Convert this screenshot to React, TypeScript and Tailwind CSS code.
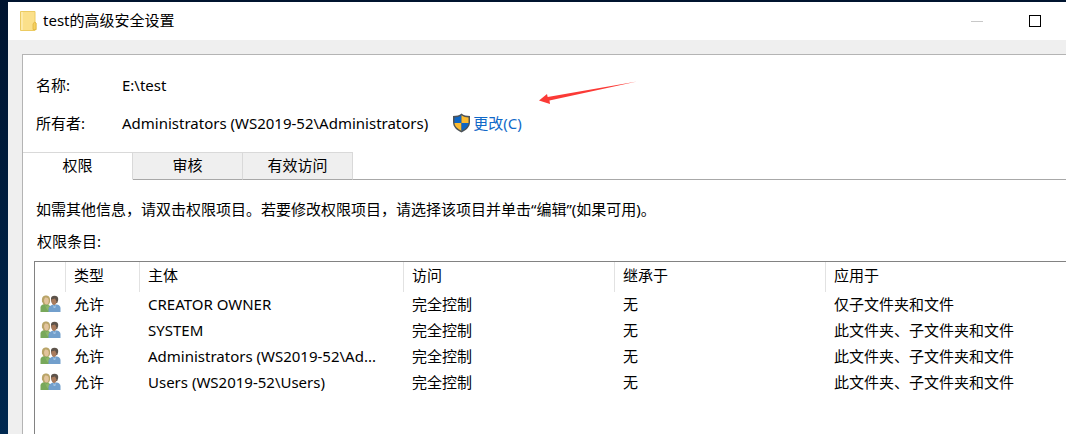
import React from "react";

type Entry = {
  type: string;
  principal: string;
  access: string;
  inherited: string;
  scope: string;
};

const entries: Entry[] = [
  { type: "允许", principal: "CREATOR OWNER", access: "完全控制", inherited: "无", scope: "仅子文件夹和文件" },
  { type: "允许", principal: "SYSTEM", access: "完全控制", inherited: "无", scope: "此文件夹、子文件夹和文件" },
  { type: "允许", principal: "Administrators (WS2019-52\\Ad...", access: "完全控制", inherited: "无", scope: "此文件夹、子文件夹和文件" },
  { type: "允许", principal: "Users (WS2019-52\\Users)", access: "完全控制", inherited: "无", scope: "此文件夹、子文件夹和文件" },
];

function FolderIcon() {
  return (
    <svg width="17" height="20" viewBox="0 0 17 20" aria-hidden="true">
      <path d="M0.5 0.5h14.5v10.5l1 1v6.500l-1 1H0.500z" fill="#fbe08a" stroke="#eccb62" />
      <path d="M1 1h2v18H1z" fill="#fdeaa9" />
      <path d="M13 18.500v-5.500l1.500-2 1.500 1v6.500z" fill="#f5d060" stroke="#e0b53f" strokeWidth="0.800" />
    </svg>
  );
}

function ShieldIcon() {
  return (
    <svg width="19" height="20" viewBox="0 0 19 20" aria-hidden="true">
      <path d="M9.500 0.500C7.500 2.300 4.500 3 1 3v6c0 5 3.500 8 8.500 10.500C14.500 17 18 14 18 9V3C14.500 3 11.500 2.300 9.500 0.500z" fill="#4e5357" />
      <path d="M9 2.500C7.300 3.800 5 4.400 2.500 4.500V10H9.500V2.200z" fill="#0f66c4" />
      <path d="M9.500 2.200C11.500 3.800 14 4.400 16.500 4.500V10h-7z" fill="#fdbb2f" />
      <path d="M2.500 10H9.500v7.700C5.500 15.700 2.800 13.500 2.500 10z" fill="#fdbb2f" />
      <path d="M9.500 10h7c-0.300 3.500-3 5.700-7 7.700z" fill="#0f66c4" />
    </svg>
  );
}

function GroupIcon() {
  return (
    <svg width="21" height="18" viewBox="0 0 21 18" aria-hidden="true">
      <path d="M0.500 17v-4.500c0-2 1.500-3 4-3.500h3l2.500 2v6z" fill="#78a85a" />
      <path d="M2 6.500C1.500 2.500 3 0.500 6 0.500s4.500 2 4 6.500l-1 2.500H3.500z" fill="#b9a468" />
      <path d="M5 2.500c2-0.500 3.800 0.500 3.800 3S8 9.500 6.500 9.500 4 7.500 4 5z" fill="#e2c49c" />
      <path d="M4.500 9l2 2.500 2-2 1 3-2 3z" fill="#8db668" />
      <path d="M8.500 17v-3c0-2 2-4 4.500-4.500h4c2.500 0.500 3.500 2 3.500 4V17z" fill="#729fcc" />
      <path d="M11 5c-0.500-3 1-4.200 3.500-4.200S18.500 2 18.200 5l-1 3-5.200 0.500z" fill="#5d534a" />
      <path d="M11.300 4.500 15 3.500l1.500 3c0 2-1 3.500-2.500 3.500s-2.700-2-2.700-5.500z" fill="#a97b5c" />
      <path d="M13 10l1.500 1.500L16 10l-0.700 3h-1.600z" fill="#a3c4e4" />
    </svg>
  );
}

function Arrow() {
  return (
    <svg className="absolute left-[516px] top-[25px]" width="100" height="26" viewBox="0 0 100 26" aria-hidden="true">
      <path d="M0 20.500 8 14l0.700 3L98 1.500 10.500 20.500l0.500 3.500z" fill="#fb3a36" />
    </svg>
  );
}

const tabs = ["权限", "审核", "有效访问"];

export default function App() {
  const [active, setActive] = React.useState(0);
  const th = "border-r border-[#e2e2e2] p-0 pb-1 pl-2 text-left font-normal";
  const td = "whitespace-nowrap p-0 pb-0.5 pl-2";

  return (
    <div className="min-h-screen overflow-hidden bg-linear-to-b from-[#00142f] to-[#002850] pl-2 pt-0.5 font-['Noto_Sans','Noto_Sans_CJK_SC',sans-serif] text-[15px] leading-6 text-black">
      <div className="flex min-h-[432px] flex-col bg-[#efefef]">
        <header className="flex h-[38px] items-center bg-white pl-3 pr-6">
          <FolderIcon />
          <h1 className="ml-1.5 flex-1 pb-0.5 text-[15px]">test的高级安全设置</h1>
          <button type="button" aria-label="最小化" className="mr-11 flex h-6 w-3.5 items-center justify-center">
            <span className="h-px w-3 bg-[#c8c8c8]" />
          </button>
          <button type="button" aria-label="最大化" className="flex h-6 w-3.5 items-center justify-center">
            <span className="size-3 border border-black" />
          </button>
        </header>

        <main className="flex flex-1 flex-col pl-3.5 pt-3.5">
          <div className="relative flex flex-1 flex-col border-l border-t border-[#b4b4b4] bg-white pt-[18px]">
            <dl className="grid grid-cols-[86px_1fr] gap-y-3.5 pl-[13px]">
              <dt>名称:</dt>
              <dd>E:\test</dd>
              <dt>所有者:</dt>
              <dd className="flex items-center">
                Administrators (WS2019-52\Administrators)
                <a href="#change" className="ml-6 flex items-center gap-0.5 text-[#0f68c8]">
                  <ShieldIcon />
                  更改(C)
                </a>
              </dd>
            </dl>
            <Arrow />

            <div role="tablist" className="mt-[17px] flex h-7">
              {tabs.map((tab, i) => (
                <button
                  key={tab}
                  type="button"
                  role="tab"
                  aria-selected={active === i}
                  onClick={() => setActive(i)}
                  className={
                    active === i
                      ? "w-[110px] border-b border-r border-t border-[#d9d9d9] border-b-white bg-white pb-0.5"
                      : "w-[110px] border-b border-r border-t border-[#d9d9d9] border-b-[#a8a8a8] bg-[#efefef] pb-0.5"
                  }
                >
                  {tab}
                </button>
              ))}
              <div className="flex-1 border-b border-[#a8a8a8]" />
            </div>

            <p className="mt-[17px] whitespace-nowrap pl-[13px]">
              如需其他信息，请双击权限项目。若要修改权限项目，请选择该项目并单击“编辑”(如果可用)。
            </p>
            <h2 id="entries" className="mt-2 pl-3.5">权限条目:</h2>

            <div className="ml-[11px] mt-2 flex-1 border-l border-t border-[#828282]">
              <table aria-labelledby="entries" className="w-full table-fixed border-separate border-spacing-0">
                <colgroup>
                  <col className="w-[31px]" />
                  <col className="w-[74px]" />
                  <col className="w-[264px]" />
                  <col className="w-[211px]" />
                  <col className="w-[211px]" />
                  <col />
                </colgroup>
                <thead>
                  <tr className="h-[30px]">
                    <th className={th} aria-label="图标" />
                    <th className={th}>类型</th>
                    <th className={th}>主体</th>
                    <th className={th}>访问</th>
                    <th className={th}>继承于</th>
                    <th className="p-0 pb-1 pl-2 text-left font-normal">应用于</th>
                  </tr>
                </thead>
                <tbody>
                  {entries.map((e) => (
                    <tr key={e.principal} className="h-[26px]">
                      <td className="p-0 pb-0.5 pl-[5px]"><GroupIcon /></td>
                      <td className={td}>{e.type}</td>
                      <td className={td}>{e.principal}</td>
                      <td className={td}>{e.access}</td>
                      <td className={td}>{e.inherited}</td>
                      <td className={td}>{e.scope}</td>
                    </tr>
                  ))}
                </tbody>
              </table>
            </div>
          </div>
        </main>
      </div>
    </div>
  );
}
